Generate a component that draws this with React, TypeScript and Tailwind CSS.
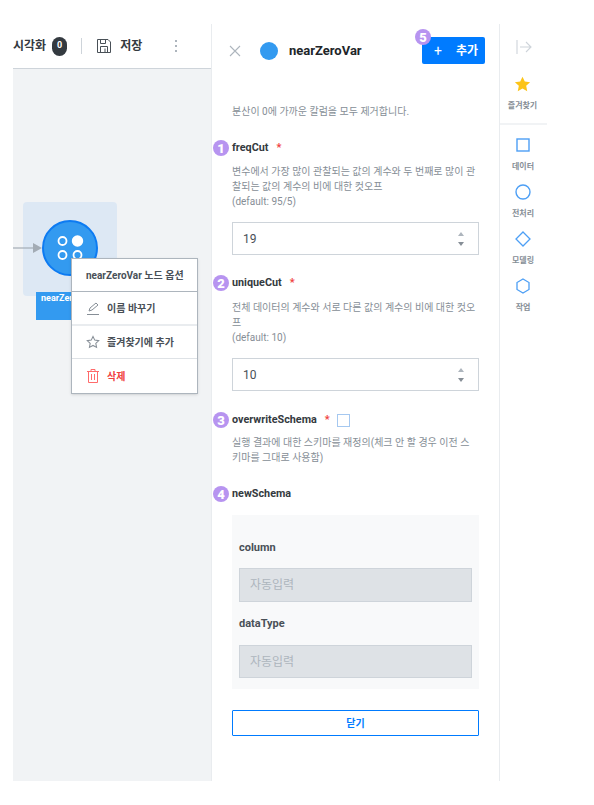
import React from "react";

const font = { fontFamily: 'Roboto, "Noto Sans CJK KR", sans-serif' };

function Badge({ n }: { n: string }) {
  return (
    <span className="absolute left-[-19px] top-1/2 flex h-[16px] w-[16px] -translate-y-1/2 items-center justify-center rounded-full bg-[#b794f0] text-[13px] font-black leading-none text-white">
      {n}
    </span>
  );
}

function NumberField({ value }: { value: string }) {
  return (
    <div className="flex h-[33px] w-[247px] items-center justify-between border border-[#ced4da] bg-white pl-[10px] pr-[14px] text-[12px] text-[#495057]">
      <span>{value}</span>
      <span className="flex flex-col gap-[6px]">
        <span className="h-0 w-0 border-x-[3px] border-b-[4px] border-x-transparent border-b-[#adb5bd]" />
        <span className="h-0 w-0 border-x-[3px] border-t-[4px] border-x-transparent border-t-[#868e96]" />
      </span>
    </div>
  );
}

function Label({ n, text, star, children }: { n: string; text: string; star?: boolean; children?: React.ReactNode }) {
  return (
    <div className="relative flex h-[16px] items-center text-[10.8px] font-bold text-[#343a40]">
      <Badge n={n} />
      <span>{text}</span>
      {star && <span className="ml-[8px] text-[#f03e3e]">*</span>}
      {children}
    </div>
  );
}

function AutoField({ h }: { h: string }) {
  return (
    <div className={`flex items-center border border-[#ced4da] bg-[#dee2e6] pl-[10px] text-[12px] text-[#adb5bd] ${h}`}>
      자동입력
    </div>
  );
}

function SideItem({ label, children }: { label: string; children: React.ReactNode }) {
  return (
    <div className="flex h-[47px] flex-col items-center">
      <div className="flex h-[20px] w-[20px] items-center justify-center">{children}</div>
      <span className="mt-[6px] text-[8px] font-bold leading-[12px] text-[#868e96]">{label}</span>
    </div>
  );
}

export default function App() {
  return (
    <div className="flex h-[805px] w-[594px] bg-white pb-[24px] pl-[13px] pt-[24px]" style={font}>
      {/* Left canvas column */}
      <div className="flex w-[198px] flex-col">
        <div className="flex h-[45px] items-center border-b border-[#ced4da] bg-white text-[12px] font-bold text-[#343a40]">
          <span>시각화</span>
          <span className="ml-[6px] flex h-[19px] w-[15px] items-center justify-center rounded-full bg-[#343a40] text-[9px] text-white">0</span>
          <span className="ml-[14px] h-[16px] w-px bg-[#ced4da]" />
          <svg className="ml-[15px]" width="14" height="14" viewBox="0 0 14 14" fill="none" stroke="#495057" strokeWidth="1">
            <path d="M.5.5h10.500l2.500 2.500v10.500H.5z" />
            <path d="M3.500.5v4h5v-4M3.500 13.500v-6h7v6M8 9.500v4" />
          </svg>
          <span className="ml-[9px]">저장</span>
          <span className="ml-[33px] flex flex-col gap-[3px]">
            <span className="h-[2px] w-[2px] bg-[#adb5bd]" />
            <span className="h-[2px] w-[2px] bg-[#adb5bd]" />
            <span className="h-[2px] w-[2px] bg-[#adb5bd]" />
          </span>
        </div>
        <div className="relative flex-1 bg-[#f1f3f5]">
          <div className="absolute left-[10px] top-[133px] h-[94px] w-[94px] rounded-[4px] bg-[#dde8f4]" />
          <svg className="absolute left-0 top-[171px]" width="30" height="16" viewBox="0 0 30 16">
            <path d="M0 8h20" stroke="#a3acb5" strokeWidth="1.2" />
            <path d="M20 3l9 5-9 5z" fill="#a3acb5" />
          </svg>
          <div className="absolute left-[29px] top-[151px] flex h-[56px] w-[56px] items-center justify-center rounded-full border-[2px] border-[#0d7bf2] bg-[#339af0]">
            <svg width="28" height="28" viewBox="0 0 28 28" fill="none" stroke="#fff" strokeWidth="1.8">
              <circle cx="6.500" cy="7" r="4" />
              <circle cx="21.500" cy="7" r="4.800" fill="#fff" />
              <circle cx="6.500" cy="21" r="4" />
              <circle cx="21.500" cy="21" r="4" />
            </svg>
          </div>
          <div className="absolute left-[23px] top-[223px] h-[28px] w-[68px] overflow-hidden bg-[#339af0] pl-[5px] text-[9px] font-bold leading-[12px] text-white">nearZeroVar</div>
          <div className="absolute left-[58px] top-[189px] w-[127px] border border-[#adb5bd] bg-white text-[10px] font-bold text-[#495057] shadow-sm">
            <div className="flex h-[33px] items-center border-b border-[#adb5bd] pl-[14px]">nearZeroVar 노드 옵션</div>
            <div className="flex h-[34px] items-center border-b-2 border-[#e9ecef] pl-[14px]">
              <svg width="14" height="13" viewBox="0 0 14 13" fill="none" stroke="#868e96" strokeWidth="1">
                <path d="M3 9l1-3 6-5 2 2-6 5z" />
                <path d="M1 12.500h12" />
              </svg>
              <span className="ml-[7px]">이름 바꾸기</span>
            </div>
            <div className="flex h-[33px] items-center border-b border-[#dee2e6] pl-[14px]">
              <svg width="14" height="14" viewBox="0 0 24 24" fill="none" stroke="#868e96" strokeWidth="1.8">
                <path d="M12 2.500l3 6.300 6.800.9-5 4.700 1.300 6.800-6.100-3.300-6.100 3.300 1.300-6.800-5-4.700 6.800-.9z" />
              </svg>
              <span className="ml-[7px]">즐겨찾기에 추가</span>
            </div>
            <div className="flex h-[34px] items-center pl-[15px] text-[#f03e3e]">
              <svg width="12" height="14" viewBox="0 0 12 14" fill="none" stroke="#ff6b6b" strokeWidth="1">
                <path d="M0 2.500h12M4 2.500V.5h4v2M1.500 2.500v11h9v-11M4.500 5v6M7.500 5v6" />
              </svg>
              <span className="ml-[8px]">삭제</span>
            </div>
          </div>
        </div>
      </div>

      {/* Settings panel */}
      <div className="flex w-[289px] flex-col border-x border-[#e9ecef]">
        <div className="mt-[13px] flex h-[27px] items-center pl-[17px] pr-[14px]">
          <svg width="12" height="12" viewBox="0 0 12 12" stroke="#adb5bd" strokeWidth="1.1">
            <path d="M1 1l10 10M11 1L1 11" />
          </svg>
          <span className="ml-[19px] h-[18px] w-[18px] rounded-full bg-[#339af0]" />
          <span className="ml-[11px] text-[13px] font-bold text-[#212529]">nearZeroVar</span>
          <div className="relative ml-auto flex h-[27px] w-[63px] items-center rounded-[2px] bg-[#007bff] pl-[12px] text-[12px] font-bold text-white">
            <span className="mr-[14px] text-[14px] font-normal leading-none">+</span>추가
            <span className="absolute left-[-7px] top-[-8px] flex h-[16px] w-[16px] items-center justify-center rounded-full bg-[#b794f0] text-[13px] font-black leading-none text-white">5</span>
          </div>
        </div>
        <div className="flex flex-col px-[20px]">
          <p className="mt-[41px] text-[10px] leading-[14px] text-[#868e96]">분산이 0에 가까운 칼럼을 모두 제거합니다.</p>
          <div className="mt-[21px]"><Label n="1" text="freqCut" star /></div>
          <p className="mt-[8px] w-[245px] text-[10px] leading-[15px] text-[#868e96]">
            변수에서 가장 많이 관찰되는 값의 계수와 두 번째로 많이 관찰되는 값의 계수의 비에 대한 컷오프<br />(default: 95/5)
          </p>
          <div className="mt-[13px]"><NumberField value="19" /></div>
          <div className="mt-[20px]"><Label n="2" text="uniqueCut" star /></div>
          <p className="mt-[9px] w-[245px] text-[10px] leading-[15px] text-[#868e96]">
            전체 데이터의 계수와 서로 다른 값의 계수의 비에 대한 컷오프<br />(default: 10)
          </p>
          <div className="mt-[13px]"><NumberField value="10" /></div>
          <div className="mt-[21px]">
            <Label n="3" text="overwriteSchema" star>
              <span className="ml-[7px] h-[13px] w-[13px] border border-[#a5c8f0] bg-white" />
            </Label>
          </div>
          <p className="mt-[7px] w-[245px] text-[10px] leading-[15px] text-[#868e96]">실행 결과에 대한 스키마를 재정의(체크 안 할 경우 이전 스키마를 그대로 사용함)</p>
          <div className="mt-[21px]"><Label n="4" text="newSchema" /></div>
          <div className="mt-[13px] bg-[#f8f9fa] px-[7px] pb-[11px] pt-[26px]">
            <div className="text-[11px] font-bold leading-[14px] text-[#495057]">column</div>
            <div className="mt-[13px]"><AutoField h="h-[34px]" /></div>
            <div className="mt-[15px] text-[11px] font-bold leading-[14px] text-[#495057]">dataType</div>
            <div className="mt-[14px]"><AutoField h="h-[33px]" /></div>
          </div>
          <button className="mt-[21px] flex h-[26px] w-[247px] items-center justify-center rounded-[1px] border border-[#007bff] bg-white text-[10px] font-bold text-[#007bff]">닫기</button>
        </div>
      </div>

      {/* Right rail */}
      <div className="flex w-[47px] flex-col">
        <div className="flex h-[46px] items-center justify-center">
          <svg width="16" height="14" viewBox="0 0 16 14" fill="none" stroke="#ced4da" strokeWidth="1.1">
            <path d="M1 0v14M4 7h11M10 2l5 5-5 5" />
          </svg>
        </div>
        <div className="mt-[6px] flex flex-col items-center pr-[2px]">
          <svg width="17" height="16" viewBox="0 0 24 24" fill="#fcc419"><path d="M12 1l3.400 7.400 8 1-5.900 5.400 1.600 8L12 18.800l-7.100 4 1.600-8L.6 9.400l8-1z" /></svg>
          <span className="mt-[8px] text-[8px] font-bold leading-[12px] text-[#868e96]">즐겨찾기</span>
        </div>
        <div className="mt-[11px] h-[2px] bg-[#f1f3f5]" />
        <div className="mt-[10px] flex flex-col pr-[1px]">
          <SideItem label="데이터">
            <svg width="14" height="14" viewBox="0 0 14 14" fill="none" stroke="#4d9ff5" strokeWidth="1.4"><rect x="1" y="1" width="12" height="12" /></svg>
          </SideItem>
          <SideItem label="전처리">
            <svg width="16" height="16" viewBox="0 0 16 16" fill="none" stroke="#4d9ff5" strokeWidth="1.4"><circle cx="8" cy="8" r="7" /></svg>
          </SideItem>
          <SideItem label="모델링">
            <svg width="16" height="16" viewBox="0 0 16 16" fill="none" stroke="#4d9ff5" strokeWidth="1.3"><path d="M8 1l7 7-7 7-7-7z" /></svg>
          </SideItem>
          <SideItem label="작업">
            <svg width="14" height="16" viewBox="0 0 14 16" fill="none" stroke="#4d9ff5" strokeWidth="1.3"><path d="M7 1l6 3.500v7L7 15l-6-3.500v-7z" /></svg>
          </SideItem>
        </div>
      </div>
    </div>
  );
}
